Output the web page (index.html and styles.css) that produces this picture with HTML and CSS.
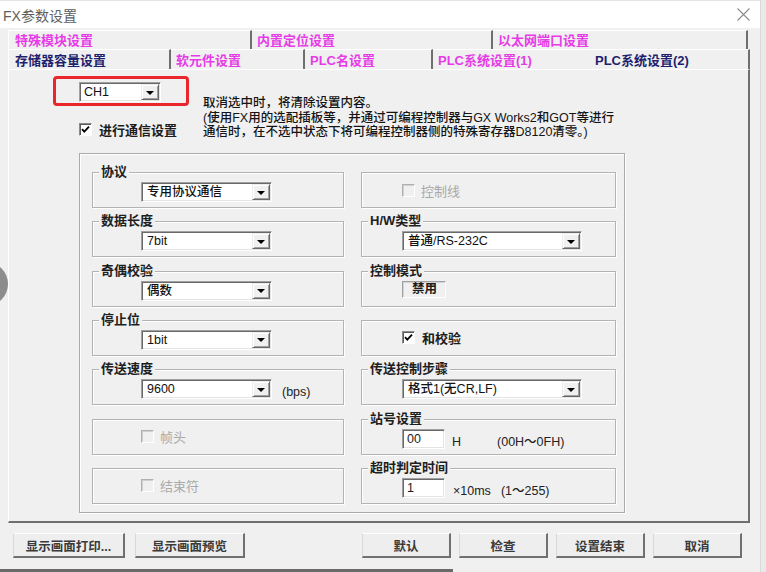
FILE: index.html
```html
<!DOCTYPE html>
<html lang="zh-CN">
<head>
<meta charset="utf-8">
<title>FX参数设置</title>
<link rel="stylesheet" href="styles.css">
</head>
<body>
<div class="window">
  <div class="titlebar">
    <span class="title">FX参数设置</span>
    <svg class="close" width="13" height="13" viewBox="0 0 13 13"><path d="M0.5 0.5L12.5 12.5M12.5 0.5L0.5 12.5" stroke="#8c8c8c" stroke-width="1.1" fill="none"/></svg>
  </div>

  <div class="tabs">
    <div class="tabrow back">
      <div class="tab first w1a">特殊模块设置</div>
      <div class="tab w1b">内置定位设置</div>
      <div class="tab w1c">以太网端口设置</div>
    </div>
    <div class="tabrow front">
      <div class="tab first dark w2a">存储器容量设置</div>
      <div class="tab w2b">软元件设置</div>
      <div class="tab w2c">PLC名设置</div>
      <div class="tab w2d">PLC系统设置(1)</div>
      <div class="tab dark sel w2e">PLC系统设置(2)</div>
    </div>
  </div>

  <div class="panel">
    <div class="toprow">
      <div class="topleft">
        <div class="combo ch"><span class="val">CH1</span><span class="cbtn"></span></div>
        <div class="checkrow main">
          <span class="chk"><svg viewBox="0 0 11 11" width="11" height="11"><path d="M2 5.2L4.3 7.6L9 2.6" stroke="#000" stroke-width="1.8" fill="none"/></svg></span>
          <span class="ctext">进行通信设置</span>
        </div>
      </div>
      <div class="desc">
        <div>取消选中时，将清除设置内容。</div>
        <div>(使用FX用的选配插板等，并通过可编程控制器与GX Works2和GOT等进行</div>
        <div>通信时，在不选中状态下将可编程控制器侧的特殊寄存器D8120清零。)</div>
      </div>
    </div>

    <div class="bigbox">
      <div class="grid">
        <div class="group">
          <span class="lg">协议</span>
          <div class="gc l"><div class="combo cw1"><span class="val">专用协议通信</span><span class="cbtn"></span></div></div>
        </div>
        <div class="group center r">
          <span class="chk dis"></span><span class="ctext distext">控制线</span>
        </div>

        <div class="group">
          <span class="lg">数据长度</span>
          <div class="gc l"><div class="combo cw1"><span class="val">7bit</span><span class="cbtn"></span></div></div>
        </div>
        <div class="group">
          <span class="lg">H/W类型</span>
          <div class="gc r"><div class="combo cw2"><span class="val">普通/RS-232C</span><span class="cbtn"></span></div></div>
        </div>

        <div class="group">
          <span class="lg">奇偶校验</span>
          <div class="gc l"><div class="combo cw1"><span class="val">偶数</span><span class="cbtn"></span></div></div>
        </div>
        <div class="group">
          <span class="lg">控制模式</span>
          <div class="gc r"><div class="display">禁用</div></div>
        </div>

        <div class="group">
          <span class="lg">停止位</span>
          <div class="gc l"><div class="combo cw1"><span class="val">1bit</span><span class="cbtn"></span></div></div>
        </div>
        <div class="group center r">
          <span class="chk"><svg viewBox="0 0 11 11" width="11" height="11"><path d="M2 5.2L4.3 7.6L9 2.6" stroke="#000" stroke-width="1.8" fill="none"/></svg></span><span class="ctext sum">和校验</span>
        </div>

        <div class="group">
          <span class="lg">传送速度</span>
          <div class="gc l"><div class="combo cw1"><span class="val">9600</span><span class="cbtn"></span></div><span class="unit bps">(bps)</span></div>
        </div>
        <div class="group">
          <span class="lg">传送控制步骤</span>
          <div class="gc r"><div class="combo cw2"><span class="val">格式1(无CR,LF)</span><span class="cbtn"></span></div></div>
        </div>

        <div class="group center l">
          <span class="chk dis"></span><span class="ctext distext">帧头</span>
        </div>
        <div class="group">
          <span class="lg">站号设置</span>
          <div class="gc r"><div class="input">00</div><span class="unit h">H</span><span class="unit range1">(00H～0FH)</span></div>
        </div>

        <div class="group center l">
          <span class="chk dis"></span><span class="ctext distext">结束符</span>
        </div>
        <div class="group">
          <span class="lg">超时判定时间</span>
          <div class="gc r"><div class="input">1</div><span class="unit ms">×10ms</span><span class="unit range2">(1～255)</span></div>
        </div>
      </div>
    </div>

    <div class="redmark"></div>
  </div>

  <div class="buttons">
    <div class="btn b1">显示画面打印...</div>
    <div class="btn b2">显示画面预览</div>
    <div class="btn b3">默认</div>
    <div class="btn b4">检查</div>
    <div class="btn b4">设置结束</div>
    <div class="btn b4">取消</div>
  </div>
</div>
<div class="blob"></div>
<div class="progress"></div>
</body>
</html>
```

FILE: styles.css
```css
html, body {
  margin: 0;
  padding: 0;
}
body {
  width: 766px;
  height: 572px;
  overflow: hidden;
  position: relative;
  background: #e9e9e9;
  font-family: "Liberation Sans", "Noto Sans CJK SC", sans-serif;
  color: #1c1c1c;
}
.window {
  width: 761px;
  height: 572px;
  background: #f0f0f0;
  border-right: 1px solid #dadada;
  box-sizing: border-box;
}
.titlebar {
  height: 28px;
  background: #fff;
  border-top: 1px solid #e4e4e4;
  box-sizing: border-box;
  display: flex;
  align-items: center;
  justify-content: space-between;
  padding: 0 10px 0 3px;
}
.title {
  font-size: 14px;
  color: #5e5e5e;
}

/* tabs */
.tabs {
  margin: 2px 0 0 8px;
}
.tabrow {
  display: flex;
  height: 19px;
}
.tabrow.front {
  height: 20px;
}
.tab {
  box-sizing: border-box;
  height: 100%;
  font-size: 13px;
  font-weight: bold;
  line-height: 16px;
  color: #e63ce6;
  padding: 2px 0 0 5px;
  border-top: 1px solid #fff;
  border-right: 2px solid #6f6f6f;
  white-space: nowrap;
}
.tab.first {
  padding-left: 6px;
  border-left: 1px solid #fff;
}
.tab.dark {
  color: #1f1f6e;
}
.tab.sel {
  padding-left: 5px;
}
.tabrow.front .tab {
  padding-top: 3px;
}
.w1a { width: 244px; }
.w1b { width: 241px; }
.w1c { width: 255px; }
.w2a { width: 163px; }
.w2b { width: 134px; }
.w2c { width: 128px; }
.w2d { width: 157px; border-right-color: transparent; }
.w2e { width: 160px; }

/* panel */
.panel {
  position: relative;
  margin-left: 8px;
  width: 742px;
  height: 454px;
  box-sizing: border-box;
  border-style: solid;
  border-width: 1px 2px 2px 1px;
  border-color: #fff #6f6f6f #6f6f6f #fff;
  padding: 12px 0 0 70px;
}
.toprow {
  display: flex;
  height: 56px;
}
.topleft {
  width: 124px;
}
.desc {
  margin-top: 14px;
  font-size: 12.5px;
  font-weight: 500;
  line-height: 14.5px;
  color: #141414;
  white-space: nowrap;
}
.checkrow {
  display: flex;
  align-items: center;
}
.checkrow.main {
  margin-top: 18px;
}
.checkrow.main .ctext {
  margin-left: 7px;
  font-size: 13px;
  font-weight: bold;
}

.redmark {
  position: absolute;
  left: 44px;
  top: 6px;
  width: 136px;
  height: 30px;
  box-sizing: border-box;
  border: 3px solid #e8262b;
  border-radius: 4px;
}

/* controls */
.combo {
  display: flex;
  height: 20px;
  box-sizing: border-box;
  background: #fff;
  border-style: solid;
  border-width: 1px;
  border-color: #a0a0a0 #fff #fff #a0a0a0;
  box-shadow: inset 1px 1px #696969, inset -1px -1px #e3e3e3;
  padding: 1px;
}
.combo .val {
  flex: 1;
  padding-left: 4px;
  font-size: 12.5px;
  font-weight: 500;
  line-height: 16px;
  color: #111;
  white-space: nowrap;
}
.cbtn {
  width: 18px;
  height: 16px;
  box-sizing: border-box;
  background: #f0f0f0;
  border-style: solid;
  border-width: 1px;
  border-color: #ececec #696969 #696969 #ececec;
  box-shadow: inset 1px 1px #fff, inset -1px -1px #a0a0a0;
  display: flex;
  align-items: center;
  justify-content: center;
}
.cbtn::after {
  content: "";
  width: 0;
  height: 0;
  border-top: 4px solid #000;
  border-left: 4px solid transparent;
  border-right: 4px solid transparent;
  margin-top: 1px;
}
.combo.ch {
  width: 82px;
}
.combo.ch .val {
  font-weight: normal;
  padding-left: 3px;
  font-size: 12.5px;
}
.cw1 { width: 131px; }
.cw2 { width: 180px; }

.chk {
  width: 13px;
  height: 13px;
  box-sizing: border-box;
  background: #fff;
  border-style: solid;
  border-width: 1px;
  border-color: #8a8a8a #fff #fff #8a8a8a;
  box-shadow: inset 1px 1px #5a5a5a;
  display: flex;
  align-items: center;
  justify-content: center;
  flex: none;
}
.chk svg {
  display: block;
}
.chk.dis {
  background: #f0f0f0;
  border-color: #b0b0b0 #fff #fff #b0b0b0;
  box-shadow: inset 1px 1px #d0d0d0;
}
.ctext {
  margin-left: 6px;
  font-size: 13px;
  font-weight: bold;
  white-space: nowrap;
}
.distext {
  color: #a9a9a9;
  font-weight: normal;
}
.ctext.sum {
  margin-left: 7px;
}

.input {
  width: 43px;
  height: 20px;
  box-sizing: border-box;
  background: #fff;
  border-style: solid;
  border-width: 1px;
  border-color: #a0a0a0 #fff #fff #a0a0a0;
  box-shadow: inset 1px 1px #696969, inset -1px -1px #e3e3e3;
  padding: 2px 0 0 4px;
  font-size: 12.5px;
  font-weight: 500;
  line-height: 15px;
}
.display {
  width: 44px;
  height: 17px;
  box-sizing: border-box;
  border-style: solid;
  border-width: 1px;
  border-color: #a0a0a0 #fff #fff #a0a0a0;
  box-shadow: inset 1px 1px #d4d4d4;
  padding-left: 9px;
  font-size: 12.5px;
  font-weight: bold;
  line-height: 15px;
}
.unit {
  font-size: 12.5px;
  font-weight: 500;
  line-height: 14px;
  white-space: nowrap;
  color: #222;
}
.bps { margin: 0 0 0 10px; }
.h { margin-left: 7px; }
.range1 { margin-left: 36px; }
.ms { margin-left: 8px; font-weight: normal; }
.range2 { margin-left: 10px; }

/* big group box */
.bigbox {
  margin-top: 15px;
  width: 546px;
  height: 360px;
  box-sizing: border-box;
  border: 1px solid #aaaaaa;
  box-shadow: inset 1px 1px #fff, 1px 1px #fff;
  padding: 18px 8px 0 12px;
}
.grid {
  display: grid;
  grid-template-columns: 252px 255px;
  column-gap: 17px;
  grid-auto-rows: 36px;
  row-gap: 13.33px;
}
.group {
  box-sizing: border-box;
  border: 1px solid #b3b3b3;
  box-shadow: inset 1px 1px #fff, 1px 1px #fff;
}
.group.center {
  display: flex;
  align-items: center;
}
.group.center.l { padding-left: 48px; }
.group.center.r { padding-left: 40px; }
.lg {
  display: block;
  width: fit-content;
  margin: -9px 0 0 6px;
  padding: 0 2px;
  background: #f0f0f0;
  font-size: 13px;
  font-weight: bold;
  line-height: 16px;
  color: #1e1e1e;
  white-space: nowrap;
}
.gc {
  display: flex;
  align-items: flex-end;
  margin-top: 2px;
}
.gc.l { padding-left: 48px; }
.gc.r { padding-left: 40px; }

/* buttons */
.buttons {
  display: flex;
  padding: 10px 0 0 13px;
}
.btn {
  height: 25px;
  box-sizing: border-box;
  background: #eeeeee;
  border-style: solid;
  border-width: 1px 2px 2px 1px;
  border-color: #ffffff #707070 #707070 #d8d8d8;
  display: flex;
  align-items: center;
  justify-content: center;
  font-size: 12.5px;
  font-weight: bold;
  color: #3a3a3a;
  white-space: nowrap;
}
.b1 { width: 112px; }
.b2 { width: 110px; margin-left: 10px; }
.b3 { width: 89px; margin-left: 117px; }
.b4 { width: 89px; margin-left: 8px; }

/* overlays from the screen capture */
.blob {
  position: absolute;
  left: -36px;
  top: 262px;
  width: 44px;
  height: 44px;
  border-radius: 50%;
  background: #8d8d8d;
}
.progress {
  position: absolute;
  left: 0;
  bottom: 0;
  width: 453px;
  height: 3px;
  background: #6a6a6a;
}
```
